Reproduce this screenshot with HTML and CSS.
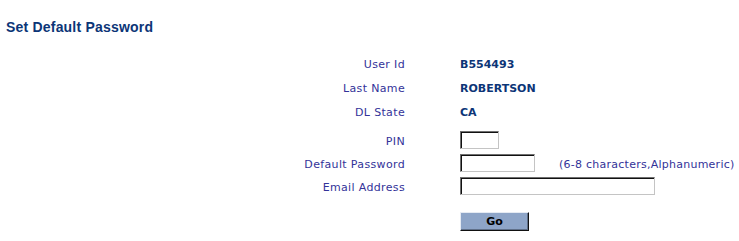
FILE: index.html
```html
<!DOCTYPE html>
<html>
<head>
<meta charset="utf-8">
<link rel="stylesheet" href="styles.css">
</head>
<body>
<h1 class="title">Set Default Password</h1>
<form class="form">
  <div class="row">
    <span class="label">User Id</span>
    <span class="value">B554493</span>
  </div>
  <div class="row">
    <span class="label">Last Name</span>
    <span class="value">ROBERTSON</span>
  </div>
  <div class="row">
    <span class="label">DL State</span>
    <span class="value">CA</span>
  </div>
  <div class="row input-row first-input">
    <label class="label" for="pin">PIN</label>
    <input class="field field-pin" id="pin" type="text">
  </div>
  <div class="row input-row">
    <label class="label" for="pwd">Default Password</label>
    <input class="field field-pwd" id="pwd" type="password">
    <span class="hint">(6-8 characters,Alphanumeric)</span>
  </div>
  <div class="row input-row">
    <label class="label" for="email">Email Address</label>
    <input class="field field-email" id="email" type="text">
  </div>
  <div class="row button-row">
    <span class="label"></span>
    <button class="go" type="button">Go</button>
  </div>
</form>
</body>
</html>
```
FILE: styles.css
```css
html, body {
  margin: 0;
  padding: 0;
  background: #ffffff;
}

body {
  font-family: "DejaVu Sans", Verdana, sans-serif;
  font-size: 11px;
  color: #333399;
}

.title {
  margin: 0;
  padding: 18px 0 0 6px;
  height: 18px;
  line-height: 18px;
  font-family: "Liberation Sans", Arial, sans-serif;
  font-size: 14px;
  font-weight: bold;
  letter-spacing: 0.2px;
  color: #0c3577;
}

.form {
  margin: 0;
  padding-top: 15px;
}

.row {
  display: flex;
  align-items: center;
  height: 24px;
}

.input-row {
  height: 23px;
}

.first-input {
  margin-top: 5px;
}

.button-row {
  height: 19px;
  margin-top: 15px;
}

.label {
  flex: 0 0 405px;
  width: 405px;
  box-sizing: border-box;
  padding-top: 2px;
  text-align: right;
  color: #333399;
  font-size: 11px;
  letter-spacing: 0.35px;
}

.input-row .label {
  padding-top: 4px;
}

.value {
  margin-left: 55px;
  padding-top: 2px;
  font-weight: bold;
  color: #0c3577;
}

.field {
  box-sizing: border-box;
  margin: 0 0 0 55px;
  height: 18px;
  padding: 0 2px;
  border: 1px solid;
  border-color: #6f6f6f #c4c4c4 #c4c4c4 #6f6f6f;
  box-shadow: inset 1px 1px 0 #111111;
  background: #ffffff;
  font-family: "DejaVu Sans", Verdana, sans-serif;
  font-size: 11px;
  outline: none;
}

.field-pin {
  width: 39px;
}

.field-pwd {
  width: 75px;
}

.field-email {
  width: 195px;
}

.hint {
  margin-left: 24px;
  padding-top: 4px;
  color: #333399;
  letter-spacing: 0.25px;
  white-space: nowrap;
}

.go {
  box-sizing: border-box;
  margin: 0 0 0 55px;
  width: 69px;
  height: 19px;
  padding: 0;
  border: 1px solid;
  border-color: #e6ebf3 #111111 #111111 #e6ebf3;
  box-shadow: inset -1px -1px 0 #5f6f88;
  background: #8ea5c8;
  color: #000000;
  font-family: "DejaVu Sans", Verdana, sans-serif;
  font-size: 11px;
  font-weight: bold;
  cursor: pointer;
}
```
